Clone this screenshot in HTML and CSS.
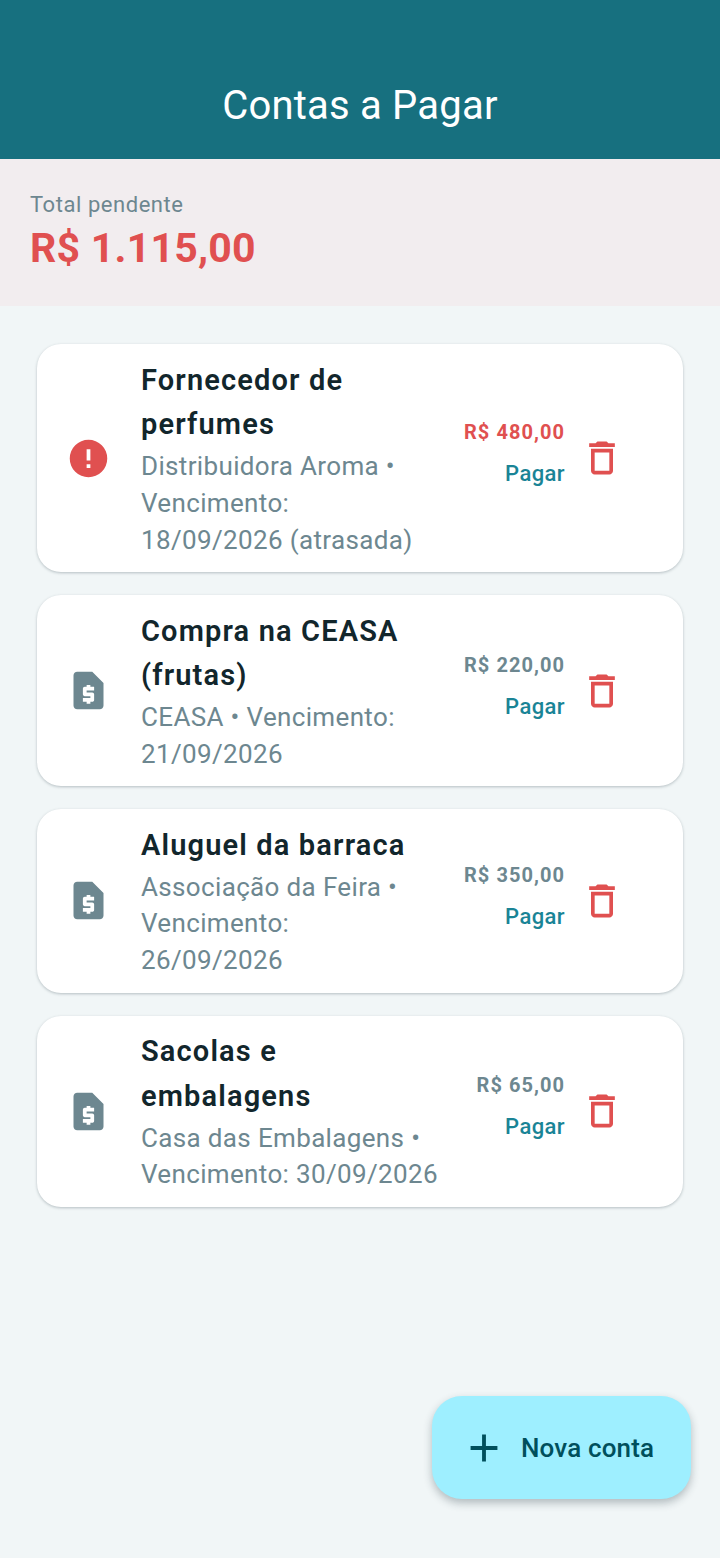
FILE: index.html
```html
<!DOCTYPE html>
<html lang="pt-BR">
<head>
<meta charset="utf-8">
<title>Contas a Pagar</title>
<link rel="stylesheet" href="styles.css">
</head>
<body>
<div class="screen">
  <header class="appbar"><h1 class="appbar-title">Contas a Pagar</h1></header>
  <section class="summary">
    <div class="summary-label">Total pendente</div>
    <div class="summary-value">R$ 1.115,00</div>
  </section>
  <main class="list">
    <article class="card">
      <div class="lead">
        <svg class="lead-icon" viewBox="0 0 24 24"><path class="fill-red" d="M12 2a10 10 0 1 0 0 20 10 10 0 0 0 0-20zm1 15h-2v-2h2v2zm0-4h-2V7h2v6z"/></svg>
      </div>
      <div class="info">
        <div class="title">Fornecedor de perfumes</div>
        <div class="sub">Distribuidora Aroma • Vencimento: 18/09/2026 (atrasada)</div>
      </div>
      <div class="money">
        <div class="amount overdue">R$ 480,00</div>
        <div class="pay">Pagar</div>
      </div>
      <svg class="trash" viewBox="0 0 24 24"><path d="M15.5 4l-1-1h-5l-1 1H5v2h14V4h-3.500zM6 19c0 1.100.9 2 2 2h8c1.100 0 2-.9 2-2V7H6v12zM8 9h8v10H8V9z"/></svg>
    </article>
    <article class="card">
      <div class="lead">
        <svg class="lead-icon" viewBox="0 0 24 24"><path class="fill-grey" d="M14 2H6c-1.100 0-2 .9-2 2v16c0 1.100.9 2 2 2h12c1.100 0 2-.9 2-2V8l-6-6zm1 10h-4v1h3c.55 0 1 .45 1 1v3c0 .55-.45 1-1 1h-1v1h-2v-1H9v-2h4v-1h-3c-.55 0-1-.45-1-1v-3c0-.55.45-1 1-1h1V9h2v1h2v2z"/></svg>
      </div>
      <div class="info">
        <div class="title">Compra na CEASA (frutas)</div>
        <div class="sub">CEASA • Vencimento: 21/09/2026</div>
      </div>
      <div class="money">
        <div class="amount">R$ 220,00</div>
        <div class="pay">Pagar</div>
      </div>
      <svg class="trash" viewBox="0 0 24 24"><path d="M15.5 4l-1-1h-5l-1 1H5v2h14V4h-3.500zM6 19c0 1.100.9 2 2 2h8c1.100 0 2-.9 2-2V7H6v12zM8 9h8v10H8V9z"/></svg>
    </article>
    <article class="card">
      <div class="lead">
        <svg class="lead-icon" viewBox="0 0 24 24"><path class="fill-grey" d="M14 2H6c-1.100 0-2 .9-2 2v16c0 1.100.9 2 2 2h12c1.100 0 2-.9 2-2V8l-6-6zm1 10h-4v1h3c.55 0 1 .45 1 1v3c0 .55-.45 1-1 1h-1v1h-2v-1H9v-2h4v-1h-3c-.55 0-1-.45-1-1v-3c0-.55.45-1 1-1h1V9h2v1h2v2z"/></svg>
      </div>
      <div class="info">
        <div class="title">Aluguel da barraca</div>
        <div class="sub">Associação da Feira • Vencimento: 26/09/2026</div>
      </div>
      <div class="money">
        <div class="amount">R$ 350,00</div>
        <div class="pay">Pagar</div>
      </div>
      <svg class="trash" viewBox="0 0 24 24"><path d="M15.5 4l-1-1h-5l-1 1H5v2h14V4h-3.500zM6 19c0 1.100.9 2 2 2h8c1.100 0 2-.9 2-2V7H6v12zM8 9h8v10H8V9z"/></svg>
    </article>
    <article class="card">
      <div class="lead">
        <svg class="lead-icon" viewBox="0 0 24 24"><path class="fill-grey" d="M14 2H6c-1.100 0-2 .9-2 2v16c0 1.100.9 2 2 2h12c1.100 0 2-.9 2-2V8l-6-6zm1 10h-4v1h3c.55 0 1 .45 1 1v3c0 .55-.45 1-1 1h-1v1h-2v-1H9v-2h4v-1h-3c-.55 0-1-.45-1-1v-3c0-.55.45-1 1-1h1V9h2v1h2v2z"/></svg>
      </div>
      <div class="info">
        <div class="title">Sacolas e embalagens</div>
        <div class="sub">Casa das Embalagens • Vencimento: 30/09/2026</div>
      </div>
      <div class="money">
        <div class="amount">R$ 65,00</div>
        <div class="pay">Pagar</div>
      </div>
      <svg class="trash" viewBox="0 0 24 24"><path d="M15.5 4l-1-1h-5l-1 1H5v2h14V4h-3.500zM6 19c0 1.100.9 2 2 2h8c1.100 0 2-.9 2-2V7H6v12zM8 9h8v10H8V9z"/></svg>
    </article>
  </main>
  <button class="fab">
    <svg class="fab-icon" viewBox="0 0 24 24"><path d="M19 13h-6v6h-2v-6H5v-2h6V5h2v6h6v2z"/></svg>
    <span class="fab-label">Nova conta</span>
  </button>
</div>
</body>
</html>
```
FILE: styles.css
```css
* { box-sizing: border-box; }
html, body { margin: 0; padding: 0; }
body { font-family: Roboto, "Noto Sans", sans-serif; background: #f1f6f7; }
.screen { position: relative; width: 720px; height: 1558px; overflow: hidden; background: #f1f6f7; }
.appbar { height: 159px; background: #17707f; display: flex; align-items: flex-end; justify-content: center; padding-bottom: 26px; }
.appbar-title { margin: 0; font-size: 40px; line-height: 54px; font-weight: 400; color: #fff; letter-spacing: 0.2px; }
.summary { height: 147px; background: #f2edef; padding: 29px 30px 0; }
.summary-label { font-size: 22px; line-height: 33px; color: #6d8790; letter-spacing: 0.55px; }
.summary-value { font-size: 41px; line-height: 54px; font-weight: 700; color: #e05050; letter-spacing: 0.25px; }
.list { padding: 38.3px 37px 0; display: flex; flex-direction: column; gap: 23px; }
.card { display: flex; align-items: center; padding: 13.3px 59px 13.7px 33px; background: #fff; border-radius: 24px; box-shadow: 0 1px 3px rgba(30, 50, 60, 0.28); }
.lead { width: 71px; flex: none; display: flex; }
.lead-icon { width: 45px; height: 45px; margin-left: -4px; display: block; }
.fill-red { fill: #e05050; }
.fill-grey { fill: #6d8790; }
.info { flex: 1; min-width: 0; }
.title { font-size: 29px; line-height: 44.800px; font-weight: 600; color: #12262c; letter-spacing: 1.15px; }
.sub { margin-top: 1px; font-size: 26px; line-height: 36.800px; color: #6d8790; letter-spacing: 0.35px; }
.money { flex: none; margin-left: 32px; display: flex; flex-direction: column; align-items: flex-end; margin-top: -10px; }
.amount { font-size: 20px; line-height: 28px; font-weight: 700; color: #6d8790; letter-spacing: 1.05px; }
.amount.overdue { color: #e05050; }
.pay { margin-top: 14px; font-size: 22px; line-height: 28px; font-weight: 500; color: #1a8496; letter-spacing: 0.4px; }
.trash { width: 44px; height: 44px; flex: none; margin-left: 15px; fill: #e05050; }
.fab { position: absolute; left: 432px; top: 1396px; width: 259px; height: 103px; border: 0; border-radius: 30px; background: #9eefff; display: flex; align-items: center; padding: 0 0 0 29px; box-shadow: 0 4px 8px rgba(30, 50, 60, 0.3); font-family: inherit; }
.fab-icon { width: 46px; height: 46px; fill: #004f5c; flex: none; }
.fab-label { margin-left: 14px; font-size: 26px; font-weight: 500; color: #004f5c; letter-spacing: 0.15px; }
```
